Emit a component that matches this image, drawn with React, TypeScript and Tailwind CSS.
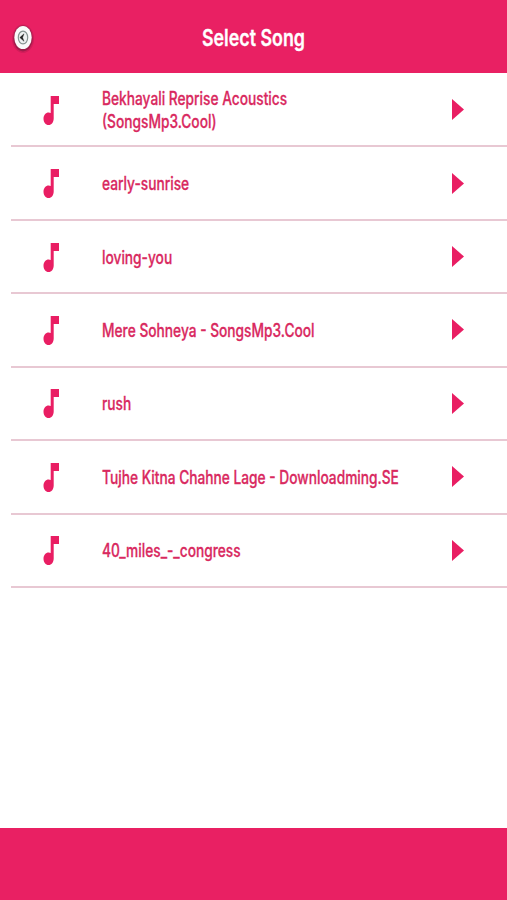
const songs = [
  { id: 1, title: 'Bekhayali Reprise Acoustics (SongsMp3.Cool)' },
  { id: 2, title: 'early-sunrise' },
  { id: 3, title: 'loving-you' },
  { id: 4, title: 'Mere Sohneya - SongsMp3.Cool' },
  { id: 5, title: 'rush' },
  { id: 6, title: 'Tujhe Kitna Chahne Lage - Downloadming.SE' },
  { id: 7, title: '40_miles_-_congress' },
];

function BackIcon() {
  return (
    <svg className="w-6 h-8" viewBox="0 0 24 32" fill="none">
      <ellipse cx="12" cy="16.8" rx="11" ry="14.2" fill="#9f1746" opacity="0.3" />
      <ellipse cx="12" cy="16.4" rx="9.8" ry="13" fill="#861c43" opacity="0.65" />
      <ellipse cx="12" cy="15.5" rx="8.7" ry="11.5" fill="#fafafa" />
      <ellipse cx="12" cy="15.5" rx="4.7" ry="6.4" fill="#eef2f2" stroke="#879492" strokeWidth="1.2" />
      <path d="M13 11.8L8.8 15.6l4.2 3.7-1.4-3.7z" fill="#222" stroke="#222" strokeWidth="0.4" />
    </svg>
  );
}

function NoteIcon() {
  return (
    <svg className="w-4 h-[29px] shrink-0" viewBox="0 0 16 29" fill="#e91e63">
      <path d="M7.7 0H16v8h-5.3v14.5c0 3.8-2.2 6.5-5.1 6.5S.5 26.3.5 22.7s2.3-6.2 5.1-6.2c.8 0 1.5.2 2.1.5z" />
    </svg>
  );
}

function PlayIcon() {
  return (
    <svg className="-mt-px w-3 h-[21px] shrink-0" viewBox="0 0 12 21" fill="#e91e63">
      <path d="M0 0l12 10.5L0 21z" />
    </svg>
  );
}

export default function App() {
  return (
    <main className="flex h-[900px] w-[507px] flex-col overflow-hidden bg-white font-['Inter',sans-serif]">
      {/* Header */}
      <header className="grid h-[73px] shrink-0 grid-cols-[1fr_auto_1fr] items-center bg-[#e92063] pb-px">
        <button className="ml-[11px] mt-1 w-6" aria-label="Back">
          <BackIcon />
        </button>
        <h1 className="w-[120px] whitespace-nowrap text-center text-[23px] font-semibold leading-7 text-white">
          <span className="-ml-[7px] mt-1 inline-block origin-center scale-x-[0.775] [-webkit-text-stroke:0.3px_white]">
            Select Song
          </span>
        </h1>
      </header>

      {/* Songs */}
      <ul className="mt-px grid h-[514px] shrink-0 grid-cols-1 grid-rows-7 pl-[11px]">
        {songs.map((song) => (
          <li key={song.id} className="flex items-center border-b-2 border-[#e8c8d3] pl-8 pr-[43px] pt-px">
            <NoteIcon />
            <div className="ml-[43px] min-w-0 flex-1">
              <p className="w-[390px] origin-left scale-x-[0.763] text-[18px] font-medium leading-[23px] text-[#d9295f] [-webkit-text-stroke:0.3px_#d9295f]">
                {song.id === 1 ? (
                  <>
                    Bekhayali Reprise Acoustics
                    <br />
                    (SongsMp3.Cool)
                  </>
                ) : (
                  song.title
                )}
              </p>
            </div>
            <PlayIcon />
          </li>
        ))}
      </ul>

      <footer className="mt-auto h-[72px] shrink-0 bg-[#e92063]" />
    </main>
  );
}
